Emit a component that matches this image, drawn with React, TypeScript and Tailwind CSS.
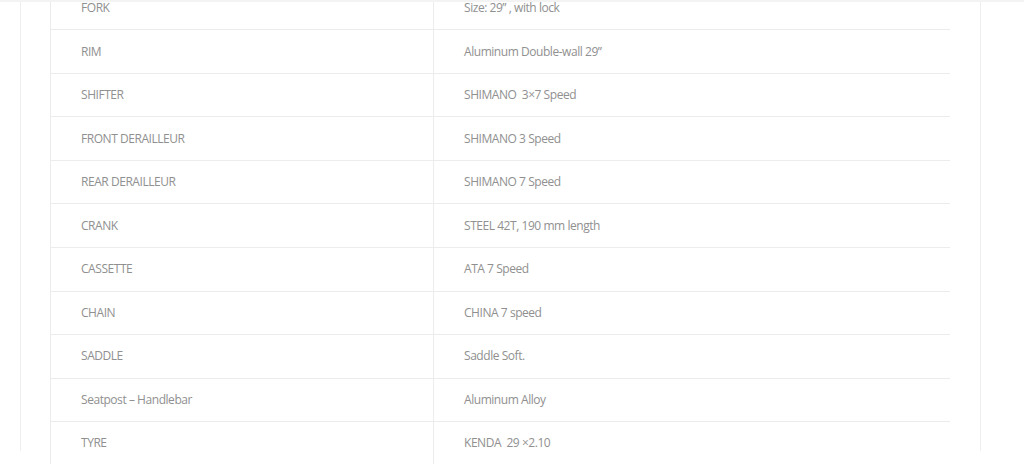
import React from "react";

const rows: [string, string][] = [
  ["FORK", "Size: 29\u201d , with lock"],
  ["RIM", "Aluminum Double-wall 29\u201d"],
  ["SHIFTER", "SHIMANO\u00a0 3\u00d77 Speed"],
  ["FRONT DERAILLEUR", "SHIMANO 3 Speed"],
  ["REAR DERAILLEUR", "SHIMANO 7 Speed"],
  ["CRANK", "STEEL 42T, 190 mm length"],
  ["CASSETTE", "ATA 7 Speed"],
  ["CHAIN", "CHINA 7 speed"],
  ["SADDLE", "Saddle Soft."],
  ["Seatpost \u2013 Handlebar", "Aluminum Alloy"],
  ["TYRE", "KENDA\u00a0 29 \u00d72.10"],
];

export default function App() {
  return (
    <div
      className="relative w-[1024px] h-[464px] overflow-hidden bg-white"
      style={{ fontFamily: '"Open Sans", "Liberation Sans", sans-serif' }}
    >
      <div className="ml-[20px] w-[961px] h-[464px] border-l border-r border-[#efefef] pl-[29px]">
        <div className="mt-[-13.3px] w-[900px] border-l border-[#ececec]">
          {rows.map(([k, v]) => (
            <div
              key={k}
              className="flex h-[43.56px] border-b border-[#ececec] text-[12px] tracking-[-0.45px] text-[#909090]"
            >
              <div className="w-[383px] border-r border-[#ececec] pl-[30px] flex items-center">
                {k}
              </div>
              <div className="flex-1 pl-[30px] flex items-center">{v}</div>
            </div>
          ))}
        </div>
      </div>
      <div className="absolute left-0 top-0 w-full h-[2px] bg-[#f3f3f3]" />
    </div>
  );
}
